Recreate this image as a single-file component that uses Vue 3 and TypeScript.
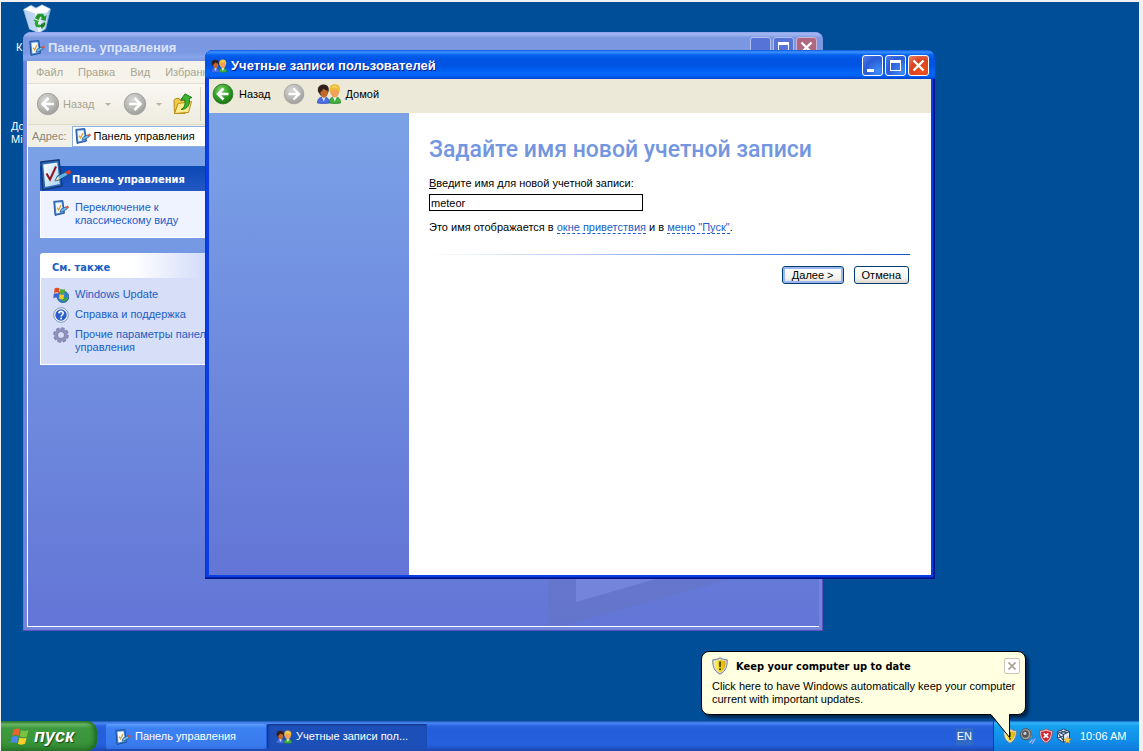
<script setup lang="ts">
import { ref } from 'vue'

interface Task { title: string; icon: string; active: boolean }

const accountName = ref('meteor')
const address = ref('Панель управления')
const balloonOpen = ref(true)
const menu = ['Файл', 'Правка', 'Вид', 'Избранное']
const seeAlso = [
  { icon: 'i-update', text: 'Windows Update' },
  { icon: 'i-help', text: 'Справка и поддержка' },
  { icon: 'i-gear', text: 'Прочие параметры панели управления' }
]
const tasks: Task[] = [
  { title: 'Панель управления', icon: 'i-panel', active: false },
  { title: 'Учетные записи пол...', icon: 'i-users', active: true }
]
</script>

<template>
  <svg class="defs" aria-hidden="true">
    <defs>
      <radialGradient id="g-green" cx="40%" cy="30%" r="75%">
        <stop offset="0" stop-color="#7fd86a" /><stop offset=".5" stop-color="#35a02b" /><stop offset="1" stop-color="#14700f" />
      </radialGradient>
      <radialGradient id="g-gray" cx="40%" cy="30%" r="75%">
        <stop offset="0" stop-color="#d8d8d6" /><stop offset=".6" stop-color="#b5b5b2" /><stop offset="1" stop-color="#9a9a98" />
      </radialGradient>
      <linearGradient id="g-shield" x1="0" x2="1">
        <stop offset="0" stop-color="#fff27a" /><stop offset=".5" stop-color="#f7da10" /><stop offset="1" stop-color="#d9a800" />
      </linearGradient>
      <linearGradient id="g-paper" x1="0" x2="1" y2="1">
        <stop offset="0" stop-color="#ffffff" /><stop offset="1" stop-color="#a9d2f2" />
      </linearGradient>
      <linearGradient id="g-bin" x1="0" x2="1">
        <stop offset="0" stop-color="#b9d4f4" /><stop offset=".5" stop-color="#f4fafc" /><stop offset="1" stop-color="#9cc3e6" />
      </linearGradient>
    </defs>
    <symbol id="i-panel" viewBox="0 0 16 16">
      <path d="M.8 1.4 9.8 .6 11.4 13.2 2 15.4Z" fill="#3f86d8" stroke="#1b4a90" stroke-width=".9" />
      <path d="M2.4 2.8 8.6 2.2 9.9 12.1 3.4 13.6Z" fill="#f2f9ff" />
      <path d="M4 7.6 5.6 9.8 8 5" fill="none" stroke="#e0a63a" stroke-width="1.4" />
      <path d="M7 12.2 8 9.2 13 6.8 14.2 8.8 10 11.4Z" fill="#6dbdea" stroke="#1c4f86" stroke-width=".7" />
      <path d="M12.8 6.7 14.8 5.6 16 7.4 14.1 8.7Z" fill="#e5542e" />
    </symbol>
    <symbol id="i-panel-big" viewBox="0 0 32 32">
      <path d="M.8 3 19 .8 22 27 3 31Z" fill="#2c68b8" stroke="#12366e" stroke-width="1.4" />
      <path d="M3.2 5.4 17.3 3.4 19.8 25 5.2 28Z" fill="url(#g-paper)" />
      <path d="M6.5 14.5 10 20.5 16 7.5" fill="none" stroke="#8f1420" stroke-width="2" />
      <path d="M15 22 17.5 17 26 12.8 28 16 20 20.5Z" fill="#64b4e6" stroke="#1c4f86" stroke-width="1" />
      <path d="M15 22 18 17.5 20 20Z" fill="#f0d7a0" />
      <path d="M25.5 13 29.5 10.8 31.5 13.5 27.5 16Z" fill="#dd3c24" />
    </symbol>
    <symbol id="i-users" viewBox="0 0 24 20">
      <path d="M.5 19C.5 15 2.6 13 6.5 13S12.5 15 12.5 19Q6.5 20 .5 19Z" fill="#4a6fe8" stroke="#2846b0" stroke-width=".7" />
      <path d="M4.8 13 6.8 17.4 8.6 13Z" fill="#dbe7ff" />
      <path d="M1 7.5C.2 2.4 3.4 .4 7 .6 11 .8 12.4 3.8 11.6 7.6L9.6 11.6H3.6Z" fill="#33201a" />
      <path d="M3.4 8Q5.4 7 6.4 4.8 8.4 6.4 10.8 6.8 11.4 10.4 9.4 12.6 6.8 14.8 4.4 12.6 3 10.6 3.4 8Z" fill="#c4682c" />
      <path d="M12.2 19C12.2 15 14 13 17.8 13S23.6 15 23.6 19Q18 20 12.2 19Z" fill="#41b043" stroke="#1f7d26" stroke-width=".7" />
      <path d="M16 13 17.8 17.4 19.8 13Z" fill="#f2fff0" />
      <path d="M12.4 7C11.8 2.6 14 .2 17.6 .2 21.8 .2 23.6 2.8 22.8 7L21 10.6H14Z" fill="#edbb38" />
      <path d="M13.6 7.4Q15.4 5.4 17.6 5.4T21.8 7.4Q22.2 10.8 20.2 12.6 17.8 14.6 15.4 12.6 13.4 10.6 13.6 7.4Z" fill="#f0a05a" />
      <path d="M14 3.8C15.6 1.6 19.8 1.6 21.4 4 19 3.2 16.4 3.2 14 3.8Z" fill="#fbe68c" />
    </symbol>
    <symbol id="i-back" viewBox="0 0 24 24">
      <circle cx="12" cy="12" r="10.8" fill="url(#g-green)" stroke="#2c7a26" />
      <path d="M12.5 6 6.5 12 12.5 18M7 12H18" fill="none" stroke="#fff" stroke-width="2.8" />
    </symbol>
    <symbol id="i-back-gray" viewBox="0 0 24 24">
      <circle cx="12" cy="12" r="10.7" fill="url(#g-gray)" stroke="#a3a3a0" />
      <path d="M12.5 6 6.5 12 12.5 18M7 12H18" fill="none" stroke="#fff" stroke-width="2.6" />
    </symbol>
    <symbol id="i-fwd-gray" viewBox="0 0 24 24">
      <circle cx="12" cy="12" r="10.7" fill="url(#g-gray)" stroke="#a3a3a0" />
      <path d="M11.5 6 17.5 12 11.5 18M17 12H6" fill="none" stroke="#fff" stroke-width="2.6" />
    </symbol>
    <symbol id="i-folder-up" viewBox="0 0 20 22">
      <path d="M1 7.5 2.5 5.5H6L7.5 7.5H12V20.5L1.5 20.5Z" fill="#f2cc48" stroke="#b98a18" />
      <path d="M1.5 20.5 5 10.5 18.5 8.5 15.5 19.5Z" fill="#fdeb8e" stroke="#b98a18" />
      <path d="M8 16.5C12 14.5 12.6 10.5 11.6 6.6L7.6 7.2 12 .8 19 4.6 16.2 5.6C17.6 12 14 16.5 8 16.5Z" fill="#3eb32e" stroke="#15751a" stroke-width=".9" />
    </symbol>
    <symbol id="i-recycle" viewBox="0 0 28 30">
      <path d="M.5 5.5 8 1.2 13 4 19 .8 27.5 5 22.5 25 16 29 6.5 25Z" fill="url(#g-bin)" stroke="#8ab2dc" stroke-width=".8" />
      <path d="M.8 5.5 8 2 12 6 19 1.2 27 5 24 8.4 13 9.4Z" fill="#fff" />
      <path d="M1.6 6.6 12 9.6 15.5 28.6 6.5 25Z" fill="#b6cdf0" opacity=".75" />
      <path d="M12 14 14.6 9.8 20 9.8 21.5 12.5 23.6 11 22.6 17 17.4 15.5 19 14 17.6 12.6 15.4 16.2Z" fill="#23962c" />
      <path d="M11 15.4 16.4 17 15 18 15 20.4 17.5 20.8 17 23.6 13 23 11.6 19.6 12.4 17.6 10.6 17Z" fill="#2aa834" />
      <path d="M21.4 17.8 22.4 20 21 23 19.4 23.6V25.6L16.8 21.8 19.6 18.6V20.4L20.2 19Z" fill="#1c7f27" />
    </symbol>
    <symbol id="i-update" viewBox="0 0 16 16">
      <circle cx="10" cy="9.8" r="5.8" fill="#2f7fd0" stroke="#1f4e90" stroke-width=".7" />
      <path d="M8 13C10 10 12 12 15 9.5 15.5 12.5 12 16.4 8 13Z" fill="#3fa53a" />
      <path d="M1.6 1.6Q4 0 6.6 1.6L6 6Q3.6 4.6 1 6Z" fill="#e24a23" />
      <path d="M7.4 1.8Q9.6 3 12 1.9L11.4 6.4Q9.2 7.4 6.8 6.2Z" fill="#54ad2c" />
      <path d="M.8 6.8Q3.4 5.6 5.8 6.9L5.2 11.2Q2.8 10 .2 11.2Z" fill="#3d62cc" />
      <path d="M6.6 7.1Q9 8.4 11.2 7.3L10.6 11.7Q8.4 12.8 6 11.5Z" fill="#f5c81c" />
    </symbol>
    <symbol id="i-help" viewBox="0 0 16 16">
      <circle cx="8" cy="8" r="7.3" fill="#f4f7fd" stroke="#8493b5" />
      <circle cx="8" cy="8" r="5.7" fill="#2a5fcb" />
      <path d="M5.9 6.4C6 3.7 10.3 3.8 10.2 6.3 10.2 7.8 8.1 7.8 8.1 9.6" fill="none" stroke="#fff" stroke-width="1.6" />
      <circle cx="8.1" cy="11.6" r="1" fill="#fff" />
    </symbol>
    <symbol id="i-gear" viewBox="0 0 16 16">
      <circle cx="8" cy="8" r="6.8" fill="none" stroke="#8080ac" stroke-width="2" stroke-dasharray="3.4 1.94" />
      <circle cx="8" cy="8" r="5.1" fill="none" stroke="#9090bc" stroke-width="3.2" />
      <circle cx="8" cy="8" r="3.5" fill="none" stroke="#6b6b9a" stroke-width=".7" />
    </symbol>
    <symbol id="i-warn" viewBox="0 0 16 18">
      <path d="M8 .8C10.5 2.4 13 2.8 15.2 2.8 15.4 9.5 14 14 8 17.2 2 14 .6 9.5 .8 2.8 3 2.8 5.5 2.4 8 .8Z" fill="#d9dde4" stroke="#75798a" />
      <path d="M8 2.6C10 3.8 12 4.1 13.6 4.2 13.6 9.4 12.4 12.9 8 15.5 3.6 12.9 2.4 9.4 2.4 4.2 4 4.1 6 3.8 8 2.6Z" fill="url(#g-shield)" />
      <path d="M7.2 4.8H8.8L8.5 10H7.5Z" fill="#332c08" stroke="#332c08" stroke-width=".4" /><circle cx="8" cy="12.2" r="1" fill="#332c08" />
    </symbol>
    <symbol id="i-danger" viewBox="0 0 16 18">
      <path d="M8 .8C10.5 2.4 13 2.8 15.2 2.8 15.4 9.5 14 14 8 17.2 2 14 .6 9.5 .8 2.8 3 2.8 5.5 2.4 8 .8Z" fill="#e7c9cf" stroke="#7b5560" />
      <path d="M8 2.6C10 3.8 12 4.1 13.6 4.2 13.6 9.4 12.4 12.9 8 15.5 3.6 12.9 2.4 9.4 2.4 4.2 4 4.1 6 3.8 8 2.6Z" fill="#d2202e" />
      <path d="M5.4 6 10.6 11.2M10.6 6 5.4 11.2" stroke="#fff" stroke-width="2" />
    </symbol>
    <symbol id="i-speaker" viewBox="0 0 16 16">
      <path d="M6 .8 11.5 2.6 11.8 9.5 7 12Z" fill="#c9cacc" stroke="#55575b" stroke-width=".6" />
      <ellipse cx="5.8" cy="6.2" rx="5.2" ry="5.6" fill="#a2a4a7" stroke="#4e5054" />
      <ellipse cx="5.4" cy="6" rx="3.4" ry="3.8" fill="#505358" /><circle cx="5" cy="5.4" r="1.6" fill="#c5c7ca" />
      <path d="M9.5 15 12.5 11.5M12 15.8 15.4 10.5" stroke="#a9b6f5" stroke-width="1.2" />
    </symbol>
    <symbol id="i-cube" viewBox="0 0 16 16">
      <path d="M7.5 1 13.5 3.5V10.5L7.5 14.5 1.5 10.5V3.5Z" fill="#dfe9f5" stroke="#2b4668" />
      <path d="M1.5 3.5 7.5 6.5 13.5 3.5M7.5 6.5V14.5M4 2.5 11 5M11 2.5 4 5M2 5 7 12M7 8 2 10" fill="none" stroke="#2b4668" stroke-width="1.1" />
      <path d="M11.5 8.5 12.6 10.8 15.2 11 13.3 12.7 13.9 15.2 11.5 13.9 9.2 15.2 9.8 12.7 8 11 10.5 10.8Z" fill="#ffd23c" stroke="#c98a10" stroke-width=".5" />
    </symbol>
    <symbol id="i-flag" viewBox="0 0 20 18">
      <path d="M3.5 2.5Q6.5.5 9.6 2.2L8.2 8.2Q5.2 6.5 2 8.2Z" fill="#f0602c" />
      <path d="M10.6 2.8Q14 4.5 17.5 2.8L16 8.9Q12.5 10.5 9.2 8.8Z" fill="#79c242" />
      <path d="M1.8 9.4Q4.8 7.6 8 9.3L6.7 15.3Q3.5 13.6.4 15.3Z" fill="#4b87ee" />
      <path d="M9 9.9Q12.3 11.6 15.8 9.9L14.3 16Q10.8 17.6 7.6 15.9Z" fill="#fccf2a" />
    </symbol>
    <symbol id="i-min" viewBox="0 0 21 21"><path d="M5 14H12V17H5Z" fill="#fff" /></symbol>
    <symbol id="i-max" viewBox="0 0 21 21"><path d="M5 5H16V16H5ZM6 8V15H15V8Z" fill="#fff" fill-rule="evenodd" /></symbol>
    <symbol id="i-close" viewBox="0 0 21 21"><path d="M5.5 5.5 15.5 15.5M15.5 5.5 5.5 15.5" stroke="#fff" stroke-width="2.4" /></symbol>
  </svg>

  <main class="desktop">
    <div class="shortcuts">
      <a class="shortcut" href="#"><svg class="bin"><use href="#i-recycle" /></svg><span>К</span></a>
      <a class="shortcut docs" href="#"><span>До<br />Mi</span></a>
    </div>

    <section class="window panel" aria-label="Панель управления">
      <header class="titlebar">
        <svg class="ic16"><use href="#i-panel" /></svg>
        <h2>Панель управления</h2>
        <div class="caption-buttons">
          <button class="cap" aria-label="Свернуть"></button>
          <button class="cap" aria-label="Развернуть"><svg><use href="#i-max" /></svg></button>
          <button class="cap close" aria-label="Закрыть"><svg><use href="#i-close" /></svg></button>
        </div>
      </header>
      <div class="panel-client">
        <nav class="menubar"><button v-for="m in menu" :key="m">{{ m }}</button></nav>
        <div class="toolbar">
          <button class="tool"><svg class="ic24"><use href="#i-back-gray" /></svg>Назад</button>
          <i class="arrow"></i>
          <button class="tool fwd" aria-label="Вперед"><svg class="ic24"><use href="#i-fwd-gray" /></svg></button>
          <i class="arrow"></i>
          <button class="tool up" aria-label="Вверх"><svg class="folder"><use href="#i-folder-up" /></svg></button>
        </div>
        <div class="addressbar">
          <label for="addr">Адрес:</label>
          <div class="field"><svg class="ic16"><use href="#i-panel" /></svg><input id="addr" v-model="address" /></div>
        </div>
        <div class="panel-body">
          <svg class="watermark" viewBox="0 0 260 190" aria-hidden="true">
            <path d="M0 0H260V121L14 190H0Z" fill="#6673c2" opacity=".5" />
            <path d="M28 0H230V108L28 166Z" fill="#7d8ee2" opacity=".6" />
          </svg>
          <aside>
            <section class="card main">
              <header><svg class="ic32"><use href="#i-panel-big" /></svg><h3>Панель управления</h3></header>
              <div class="card-body"><a href="#"><svg class="ic16"><use href="#i-panel" /></svg><span>Переключение к классическому виду</span></a></div>
            </section>
            <section class="card">
              <header><h3>См. также</h3></header>
              <div class="card-body">
                <a v-for="s in seeAlso" :key="s.text" href="#"><svg class="ic16"><use :href="'#' + s.icon" /></svg><span>{{ s.text }}</span></a>
              </div>
            </section>
          </aside>
        </div>
      </div>
    </section>

    <section class="window accounts" aria-label="Учетные записи пользователей">
      <header class="titlebar">
        <svg class="ic16"><use href="#i-users" /></svg>
        <h2>Учетные записи пользователей</h2>
        <div class="caption-buttons">
          <button class="cap" aria-label="Свернуть"><svg><use href="#i-min" /></svg></button>
          <button class="cap" aria-label="Развернуть"><svg><use href="#i-max" /></svg></button>
          <button class="cap close" aria-label="Закрыть"><svg><use href="#i-close" /></svg></button>
        </div>
      </header>
      <div class="navbar">
        <button class="nav"><svg class="ic22"><use href="#i-back" /></svg>Назад</button>
        <button class="nav" aria-label="Вперед"><svg class="ic22"><use href="#i-fwd-gray" /></svg></button>
        <button class="nav"><svg class="home"><use href="#i-users" /></svg>Домой</button>
      </div>
      <div class="accounts-body">
        <div class="side"></div>
        <form class="page" @submit.prevent>
          <h1>Задайте имя новой учетной записи</h1>
          <label for="acc"><u>В</u>ведите имя для новой учетной записи:</label>
          <input id="acc" v-model="accountName" type="text" />
          <p>Это имя отображается в <a href="#">окне приветствия</a> и в <a href="#">меню "Пуск"</a>.</p>
          <hr />
          <div class="actions">
            <button class="btn default" type="submit"><u>Д</u>алее &gt;</button>
            <button class="btn" type="button">Отмена</button>
          </div>
        </form>
      </div>
    </section>

    <aside v-if="balloonOpen" class="balloon" role="status">
      <header>
        <svg class="shield"><use href="#i-warn" /></svg>
        <h4>Keep your computer up to date</h4>
        <button aria-label="Close" @click="balloonOpen = false">
          <svg viewBox="0 0 16 16"><path d="M4 4 12 12M12 4 4 12" stroke="#a59d8b" stroke-width="2" /></svg>
        </button>
      </header>
      <p>Click here to have Windows automatically keep your computer current with important updates.</p>
      <svg class="tail" viewBox="0 0 22 26" aria-hidden="true">
        <path d="M1 0V1.5L19.5 24V0Z" fill="#ffffe1" /><path d="M0 1.5H1L19.5 24.5V1.5H22" fill="none" stroke="#000" />
      </svg>
    </aside>

    <footer class="taskbar">
      <button class="start"><svg><use href="#i-flag" /></svg>пуск</button>
      <div class="tasks">
        <button v-for="t in tasks" :key="t.title" class="task" :class="{ active: t.active }">
          <svg class="ic16"><use :href="'#' + t.icon" /></svg>{{ t.title }}
        </button>
      </div>
      <button class="lang">EN</button>
      <div class="tray">
        <svg class="tray-shield"><use href="#i-warn" /></svg>
        <svg class="tray-icon"><use href="#i-speaker" /></svg>
        <svg class="tray-shield"><use href="#i-danger" /></svg>
        <svg class="tray-icon"><use href="#i-cube" /></svg>
        <time>10:06 AM</time>
      </div>
    </footer>
  </main>
</template>

<style>
body { margin: 0; background: #f0f0f0; }
</style>

<style scoped>
* { box-sizing: border-box; }
button, input { font: inherit; color: inherit; margin: 0; padding: 0; border: 0; background: none; }
h1, h2, h3, h4, p { margin: 0; }
a { color: #215dc6; text-decoration: none; }
svg { display: block; flex: none; }
.defs { position: absolute; width: 0; height: 0; }
.ic16 { width: 16px; height: 16px; }
.ic22 { width: 22px; height: 22px; }
.ic24 { width: 24px; height: 24px; }
.ic32 { width: 32px; height: 32px; }

.desktop {
  position: relative;
  display: flex;
  flex-direction: column;
  justify-content: space-between;
  height: calc(100vh - 2px);
  margin: 2px 4px 0 1px;
  overflow: hidden;
  background: #004e98;
  color: #000;
  font: 11px/13px "Liberation Sans", Arial, sans-serif;
}
.shortcuts { display: flex; flex-direction: column; gap: 66px; padding-top: 2px; }
.shortcut { display: flex; flex-direction: column; align-items: flex-start; gap: 7px; padding-left: 15px; color: #fff; }
.docs { padding-left: 10px; }
.bin { width: 28px; height: 30px; margin-left: 7px; }

.window { position: absolute; display: flex; flex-direction: column; border-radius: 8px 8px 0 0; }
.titlebar { display: flex; align-items: center; flex: none; height: 29px; gap: 4px; }
.titlebar h2 { flex: 1; color: #fff; font: bold 13px/18px "Liberation Sans", Arial, sans-serif; }
.caption-buttons { display: flex; gap: 2px; }
.cap { width: 21px; height: 21px; border: 1px solid #fff; border-radius: 3px; background: radial-gradient(circle at 80% 80%, #3f8cf7, #2a5bd7 60%, #5580e8); }
.cap svg { width: 21px; height: 21px; margin: -1px; }
.cap.close { background: radial-gradient(circle at 70% 80%, #f0501c, #d8431f 55%, #e9886c); }

.panel { left: 22px; top: 30px; width: 800px; height: 599px; padding: 0 4px 4px; background: #7185de; box-shadow: inset -1px -1px #5950b8, inset 1px 0 #6a78d4; }
.panel .titlebar { margin: 0 -4px; padding: 2px 6px 0 6px; gap: 3px; background: linear-gradient(#8a9fe8, #a3b8f2 2px, #7b97e0 6px, #7b98e3 20px, #86a5ec 25px, #7b97e0); border-radius: 8px 8px 0 0; }
.panel .titlebar h2 { color: #dbe5fb; }
.panel .cap { border-color: #b3bff0; background: #5673d8; }
.panel .cap.close { background: #b06880; border-color: #cdb2d6; }
.panel-client { display: flex; flex-direction: column; flex: 1; min-height: 0; border-left: 1px solid #fff; border-bottom: 1px solid #fff; }
.menubar { display: flex; gap: 15px; flex: none; height: 23px; padding: 0 8px; background: #f5f3ea; color: #a9a593; border-bottom: 1px solid #e2dfd0; }
.toolbar { display: flex; align-items: center; flex: none; height: 41px; padding-left: 8px; background: linear-gradient(#f9f8f2, #eeebdf); color: #a9a593; border-bottom: 1px solid #dedbcb; }
.tool { display: flex; align-items: center; gap: 3px; }
.arrow { margin-left: 10px; border: 3px solid transparent; border-top-color: #b8b4a4; border-bottom: 0; }
.fwd { margin-left: 12px; }
.fwd + .arrow { margin-left: 9px; }
.up { margin-left: 11px; padding-right: 7px; border-right: 1px solid #d5d1bf; height: 34px; }
.folder { width: 20px; height: 24px; }
.addressbar { display: flex; align-items: center; flex: none; height: 22px; padding-left: 4px; background: #f2f0e6; color: #8b8878; }
.field { display: flex; align-items: center; gap: 3px; flex: 1; height: 21px; margin-left: 5px; padding-left: 2px; border: 1px solid #8fb0dc; background: #fff; color: #000; }
.field input { flex: 1; }
.panel-body { position: relative; flex: 1; min-height: 0; padding: 12px; overflow: hidden; background: linear-gradient(#7ba2e7, #6375d6); }
.watermark { position: absolute; left: 520px; bottom: 0; width: 260px; height: 190px; }
aside { position: relative; display: flex; flex-direction: column; gap: 15px; width: 185px; }
.card > header { display: flex; align-items: center; height: 25px; padding-left: 12px; background: linear-gradient(90deg, #fff 50%, #c6d3f7); border-radius: 3px 3px 0 0; color: #215dc6; }
.card h3 { font: bold 11px/13px "DejaVu Sans Condensed", "DejaVu Sans", sans-serif; margin-top: 3px; }
.card.main > header { align-items: flex-end; height: 32px; padding: 0; background: linear-gradient(transparent 7px, #0a48b4 7px, #2458c4); color: #fff; }
.card.main h3 { margin-bottom: 5px; }
.card-body { display: flex; flex-direction: column; gap: 7px; padding: 10px 0 10px 12px; border: 1px solid #fff; border-top: 0; background: #d6dff7; }
.card.main .card-body { background: #eff3ff; }
.card-body a { display: flex; gap: 6px; }
.card-body a svg { margin: -1px 0 -2px; }

.accounts { left: 204px; top: 48px; width: 730px; height: 529px; padding: 0 4px 4px; background: #0a3fe6; box-shadow: inset -1px -1px #00138c, inset -2px -2px #001ea0, inset 1px 0 #0831d9; }
.accounts .titlebar { margin: 0 -4px; padding: 2px 6px 0 6px; background: linear-gradient(#0a5ae0, #3a91ff 2px, #0662ee 5px, #0054e3 9px, #0055e5 16px, #0366fb 23px, #0261f5 26px, #0040c8); border-radius: 8px 8px 0 0; }
.accounts h2 { text-shadow: 1px 1px #0a1883; }
.navbar { display: flex; align-items: center; gap: 12px; flex: none; height: 34px; padding: 0 3px 4px; background: #ece9d8; }
.nav { display: flex; align-items: center; gap: 5px; }
.home { width: 24px; height: 20px; }
.accounts-body { display: flex; flex: 1; min-height: 0; background: #fff; }
.side { flex: none; width: 200px; background: linear-gradient(#7ba2e7, #6375d6); }
.page { display: flex; flex-direction: column; align-items: flex-start; flex: 1; padding: 23px 21px 0 20px; }
h1 { color: #7396df; font: 500 23px/28px Roboto, Arial, sans-serif; }
.page label { margin-top: 13px; }
.page input { width: 214px; height: 17px; margin-top: 4px; padding: 0 1px; border: 1px solid #000; background: #fff; }
.page p { margin-top: 10px; }
.page p a { border-bottom: 1px dashed #215dc6; }
hr { width: 100%; height: 1px; margin: 20px 0 11px; border: 0; background: linear-gradient(90deg, #fff, #1553d2); }
.actions { display: flex; gap: 10px; align-self: flex-end; padding-right: 1px; }
.btn { height: 18px; padding: 0 7px; border: 1px solid #003c74; border-radius: 3px; background: linear-gradient(#fff, #f3f2ec 70%, #dcd8cb); }
.btn.default { padding: 0 9px; box-shadow: inset 0 0 0 2px #9ab7f0; }

.balloon { position: absolute; right: 113px; bottom: 36px; width: 325px; height: 64px; display: block; padding: 4px 5px 0 10px; border: 1px solid #000; border-radius: 8px; background: #ffffe1; box-shadow: 3px 3px 3px rgba(0, 0, 0, .5); }
.balloon header { display: flex; align-items: center; }
.balloon h4 { flex: 1; margin: 2px 0 0 8px; font: bold 11px/13px "DejaVu Sans Condensed", "DejaVu Sans", sans-serif; }
.balloon header button { width: 16px; height: 16px; border: 1px solid #c9c5b0; border-radius: 2px; background: #fff; }
.balloon header button svg { width: 14px; height: 14px; }
.shield { width: 16px; height: 18px; margin-top: 1px; }
.balloon p { margin-top: 5px; }
.tail { position: absolute; right: 13px; top: 61px; width: 22px; height: 26px; }

.taskbar { display: flex; flex: none; height: 30px; color: #fff; background: linear-gradient(#1f4fae, #4a8cf5 2px, #2a63e0 5px, #245edb 9px, #2560dd 24px, #1c48ae); }
.start { display: flex; align-items: center; gap: 3px; width: 96px; padding-left: 9px; border-radius: 0 10px 10px 0; background: linear-gradient(#2c7a2c, #6fbb6a 3px, #3f9a3f 7px, #389438 22px, #2a7a2a); box-shadow: inset -3px 0 4px #1f6a22; font: italic bold 18px/22px "Liberation Sans", Arial, sans-serif; text-shadow: 1px 1px 1px #174a17; }
.start svg { width: 21px; height: 19px; }
.tasks { display: flex; flex: 1; gap: 1px; padding: 3px 0 2px 9px; }
.task { display: flex; align-items: center; gap: 4px; width: 160px; padding-left: 9px; border-radius: 2px; background: linear-gradient(#5e9dfb, #3c81f3 4px, #3a7bee 20px, #3270e0); }
.task.active { background: #1d4fb8; box-shadow: inset 1px 1px 2px #0f317f; }
.lang { align-self: center; height: 17px; margin-right: 20px; padding: 0 1px; background: #316ac5; }
.tray { display: flex; align-items: center; gap: 3px; width: 146px; padding-left: 9px; border-left: 1px solid #0c3f8d; background: linear-gradient(#0d6fd0, #36b5f7 2px, #15a0ee 5px, #118dea 20px, #1078d8); }
.tray-icon { width: 16px; height: 16px; }
.tray-shield { width: 14px; height: 16px; }
time { margin-left: 5px; }
</style>
